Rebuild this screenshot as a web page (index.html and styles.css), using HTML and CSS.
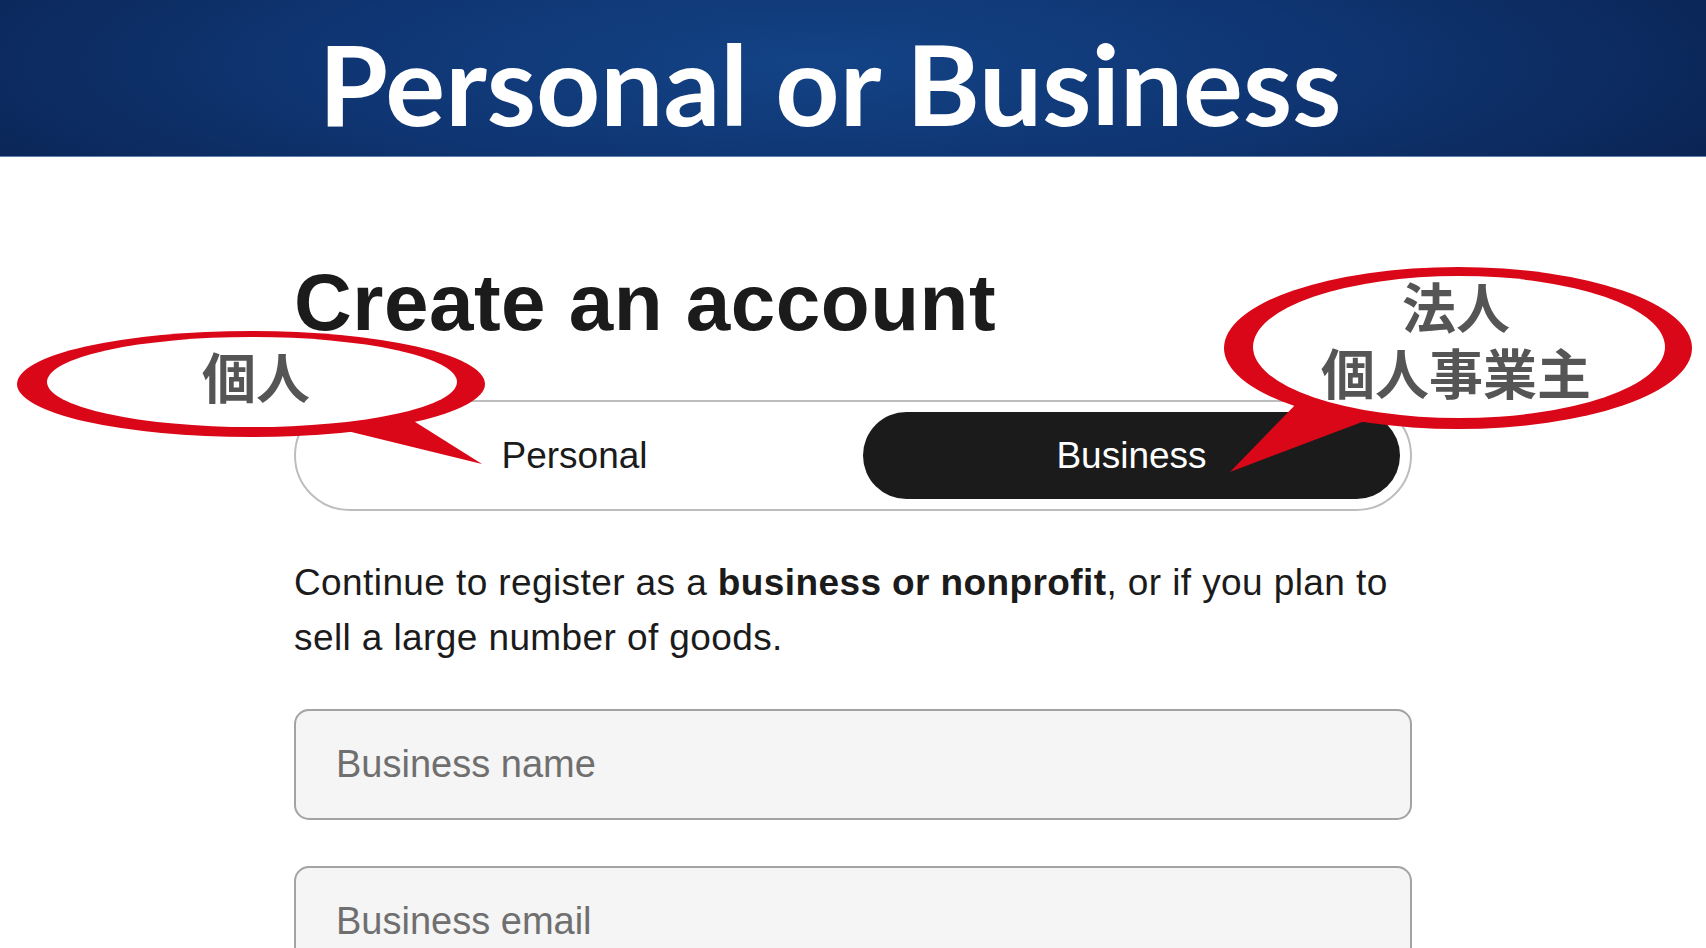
FILE: index.html
```html
<!DOCTYPE html>
<html lang="en">
<head>
  <meta charset="utf-8">
  <title>Personal or Business</title>
  <link rel="stylesheet" href="styles.css">
</head>
<body>
  <header class="banner">
    <h1 class="banner-title">Personal or Business</h1>
  </header>

  <main class="signup">
    <h2 class="signup-title">Create an account</h2>

    <div class="account-toggle">
      <button class="toggle-option">Personal</button>
      <button class="toggle-option is-active">Business</button>
    </div>

    <p class="signup-note">Continue to register as a <b>business or nonprofit</b>, or if you plan to sell a large number of goods.</p>

    <input class="field" type="text" placeholder="Business name">
    <input class="field" type="email" placeholder="Business email">
  </main>

  <!-- callouts drawn over the form -->
  <svg class="callouts" width="1706" height="948" viewBox="0 0 1706 948">
    <g class="callout">
      <ellipse class="ring" cx="251" cy="384" rx="234" ry="53"/>
      <polygon class="ring" points="335,428 412,420 482,464"/>
      <ellipse class="hole" cx="252" cy="382" rx="205" ry="45"/>
      <text class="callout-text" x="256" y="399">個人</text>
    </g>
    <g class="callout">
      <ellipse class="ring" cx="1458" cy="348" rx="234" ry="81"/>
      <polygon class="ring" points="1298,402 1378,416 1230,472"/>
      <ellipse class="hole" cx="1459" cy="347" rx="206" ry="71"/>
      <text class="callout-text" x="1456" y="329">法人</text>
      <text class="callout-text" x="1456" y="395">個人事業主</text>
    </g>
  </svg>
</body>
</html>
```

FILE: styles.css
```css
html, body { margin:0; padding:0; }
body { background:#fff; font-family:"Liberation Sans", Arial, sans-serif; color:#1b1b1b; overflow:hidden; height:948px; position:relative; }

.banner { height:156px; border-bottom:1px solid #5f7fae; box-sizing:content-box;
          background: radial-gradient(ellipse 60% 140% at 48% 40%, #134386 0%, #0f3572 50%, #0a2352 100%);
          display:flex; justify-content:center; }
.banner-title { margin:27px 46px 0 0; color:#fff; font-family:Lato, "Noto Sans", sans-serif;
                font-weight:700; font-size:112px; line-height:112px; letter-spacing:0; }

.signup { width:1118px; margin:0 auto; padding-top:100px; }

.signup-title { margin:0; font-size:80px; line-height:92px; font-weight:700; letter-spacing:0.5px; }

.account-toggle { margin-top:51px; height:87px; padding:10px; border:2px solid #bdbdbd; border-radius:60px;
                  display:grid; grid-template-columns:1fr 1fr; gap:20px; }
.toggle-option { border:0; background:none; border-radius:44px; font-family:inherit; font-size:37px; color:#1b1b1b; }
.toggle-option.is-active { background:#1b1b1b; color:#fff; }

.signup-note { margin:44px 0 0; font-size:37px; line-height:55px; letter-spacing:0.4px; }
.signup-note b { font-weight:700; }

.field { display:block; box-sizing:border-box; width:100%; height:111px; margin-top:44px; padding:0 40px;
         border:2px solid #a3a3a3; border-radius:15px; background:#f5f5f5;
         font-family:inherit; font-size:38px; color:#1b1b1b; }
.field + .field { margin-top:46px; }
.field::placeholder { color:#6f6f6f; }

.callouts { position:absolute; left:0; top:0; pointer-events:none; }
.callout .ring { fill:#d90718; }
.callout .hole { fill:#fff; }
.callout-text { font-family:"Noto Sans CJK JP", sans-serif; font-weight:700; font-size:54px; fill:#555; text-anchor:middle; }
```
